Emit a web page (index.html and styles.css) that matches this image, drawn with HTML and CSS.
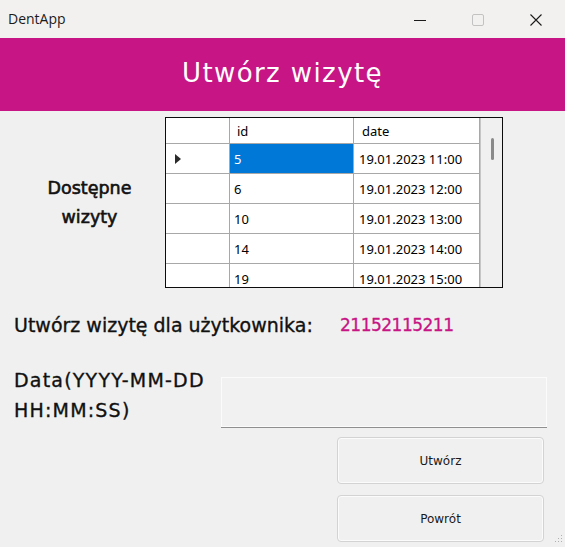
FILE: index.html
```html
<!DOCTYPE html>
<html lang="pl">
<head>
<meta charset="utf-8">
<title>DentApp</title>
<link rel="stylesheet" href="styles.css">
</head>
<body>
<div class="window">
  <div class="titlebar">
    <span class="app-title">DentApp</span>
    <div class="controls">
      <span class="ctl"><svg width="12" height="12" viewBox="0 0 12 12"><line x1="0" y1="6.5" x2="12" y2="6.5" stroke="#1b1b1b" stroke-width="1"/></svg></span>
      <span class="ctl"><svg width="12" height="12" viewBox="0 0 12 12"><rect x="0.5" y="0.5" width="11" height="11" rx="1.5" fill="none" stroke="#c2c2c2" stroke-width="1"/></svg></span>
      <span class="ctl"><svg width="12" height="12" viewBox="0 0 12 12"><path d="M0.5 0.5 L11.5 11.5 M11.5 0.5 L0.5 11.5" stroke="#1b1b1b" stroke-width="1.1" fill="none"/></svg></span>
    </div>
  </div>
  <header class="banner"><h1 class="banner-title">Utwórz wizytę</h1></header>
  <main class="content">
    <section class="avail">
      <div class="avail-label">Dostępne<br>wizyty</div>
      <div class="grid">
        <div class="cells">
          <div class="cell head rowhead"></div>
          <div class="cell head col-id">id</div>
          <div class="cell head col-date">date</div>

          <div class="cell rowhead"><svg width="6" height="10" viewBox="0 0 6 10"><path d="M0 0 L6 5 L0 10 Z" fill="#2b2b2b"/></svg></div>
          <div class="cell col-id selected">5</div>
          <div class="cell col-date">19.01.2023 11:00</div>

          <div class="cell rowhead"></div>
          <div class="cell col-id">6</div>
          <div class="cell col-date">19.01.2023 12:00</div>

          <div class="cell rowhead"></div>
          <div class="cell col-id">10</div>
          <div class="cell col-date">19.01.2023 13:00</div>

          <div class="cell rowhead"></div>
          <div class="cell col-id">14</div>
          <div class="cell col-date">19.01.2023 14:00</div>

          <div class="cell rowhead"></div>
          <div class="cell col-id">19</div>
          <div class="cell col-date">19.01.2023 15:00</div>
        </div>
        <div class="vscroll"><div class="thumb"></div></div>
      </div>
    </section>
    <section class="user-row">
      <span class="user-label">Utwórz wizytę dla użytkownika:</span>
      <span class="pesel">21152115211</span>
    </section>
    <section class="date-row">
      <div class="date-label">Data(YYYY-MM-DD<br>HH:MM:SS)</div>
      <div class="textbox"></div>
    </section>
    <div class="actions">
      <button class="btn">Utwórz</button>
      <button class="btn">Powrót</button>
    </div>
  </main>
  <svg class="grip" width="8" height="10" viewBox="0 0 8 10">
    <rect x="6" y="0" width="1" height="1" fill="#b0b0b0"/>
    <rect x="6" y="3" width="1" height="1" fill="#b0b0b0"/>
    <rect x="3" y="3" width="1" height="1" fill="#b0b0b0"/>
    <rect x="6" y="6" width="1" height="1" fill="#b0b0b0"/>
    <rect x="3" y="6" width="1" height="1" fill="#b0b0b0"/>
    <rect x="0" y="6" width="1" height="1" fill="#b0b0b0"/>
  </svg>
</div>
</body>
</html>
```

FILE: styles.css
```css
html, body {
  margin: 0;
  padding: 0;
}
body {
  width: 565px;
  height: 547px;
  overflow: hidden;
  background: #f0f0f0;
}
.window {
  position: relative;
  width: 565px;
  height: 547px;
  background: #f0f0f0;
  font-family: "DejaVu Sans", sans-serif;
  color: #111;
}

/* title bar */
.titlebar {
  height: 38px;
  background: #f3f1ef;
  display: flex;
  align-items: center;
  justify-content: space-between;
  overflow: hidden;
}
.app-title {
  font-family: "Open Sans", "Noto Sans", sans-serif;
  font-size: 14px;
  color: #1b1b1b;
  padding-left: 8px;
  line-height: 38px;
}
.controls {
  display: flex;
  height: 38px;
}
.ctl {
  width: 58px;
  height: 38px;
  display: flex;
  align-items: center;
  justify-content: center;
}
.ctl svg {
  display: block;
  margin-top: 1px;
}

/* banner */
.banner {
  height: 73px;
  background: #c71585;
  display: flex;
  align-items: center;
  justify-content: center;
}
.banner-title {
  margin: 0 0 3px 0;
  font-family: "DejaVu Sans", sans-serif;
  font-weight: normal;
  font-size: 26px;
  letter-spacing: 1.4px;
  color: #ffffff;
}

/* content */
.content {
  padding-top: 6px;
}
.avail {
  display: flex;
  align-items: center;
  height: 171px;
}
.avail-label {
  width: 165px;
  box-sizing: border-box;
  padding-left: 14px;
  text-align: center;
  font-size: 17.5px;
  line-height: 29px;
  color: #111;
  -webkit-text-stroke: 0.6px #111;
}
.grid {
  width: 338px;
  height: 171px;
  box-sizing: border-box;
  border: 1px solid #0c0c0c;
  display: flex;
  overflow: hidden;
  background: #ffffff;
}
.cells {
  width: 314px;
  flex: none;
  display: grid;
  grid-template-columns: 64px 124px 126px;
  grid-template-rows: 26px;
  grid-auto-rows: 30px;
  align-content: start;
  font-family: "Noto Sans", "Open Sans", sans-serif;
  font-size: 13px;
  color: #000;
}
.cell {
  box-sizing: border-box;
  border-right: 1px solid #a8a8a8;
  border-bottom: 1px solid #a8a8a8;
  background: #fff;
  display: flex;
  align-items: center;
  padding-left: 4px;
  white-space: nowrap;
}
.cell.col-date {
  padding-left: 5px;
}
.cell.head.col-id {
  padding-left: 7px;
}
.cell.head.col-date {
  padding-left: 8px;
}
.cell.rowhead {
  padding-left: 9px;
}
.cell.selected {
  background: #0078d7;
  color: #ffffff;
}
.vscroll {
  flex: 1;
  position: relative;
  background: #f0f0f0;
  border-left: 1px solid #c6c6c6;
  padding: 20px 0 0 10px;
}
.thumb {
  width: 3px;
  height: 22px;
  border-radius: 2px;
  background: #8a8a8a;
}

.user-row {
  margin-top: 25px;
  display: grid;
  grid-template-columns: 326px auto;
  padding-left: 14px;
  line-height: 24px;
  font-size: 19px;
  color: #111;
}
.user-label {
  -webkit-text-stroke: 0.35px #111;
}
.pesel {
  font-size: 17px;
  letter-spacing: -0.5px;
  color: #c71585;
  -webkit-text-stroke: 0.3px #c71585;
}

.date-row {
  margin-top: 28px;
  display: flex;
  padding-left: 14px;
  padding-right: 18px;
}
.date-label {
  flex: 1;
  font-size: 19px;
  line-height: 30px;
  letter-spacing: 1.2px;
  white-space: nowrap;
  color: #111;
  -webkit-text-stroke: 0.35px #111;
}
.textbox {
  width: 326px;
  height: 50px;
  margin-top: 12px;
  box-sizing: border-box;
  border: 1px solid #fbfbfb;
  background: #f1f1f1;
  box-shadow: 0 1px 0 #8f8f8f;
}

.actions {
  margin-top: 10px;
  display: flex;
  flex-direction: column;
  align-items: flex-end;
  gap: 11px;
  padding-right: 21px;
}
.btn {
  width: 207px;
  height: 47px;
  box-sizing: border-box;
  border: 1px solid #d3d3d3;
  border-radius: 4px;
  background: #f0f0f0;
  box-shadow: inset 0 0 0 1px #fbfbfb;
  font-family: "DejaVu Sans", sans-serif;
  font-size: 12px;
  color: #1a1a1a;
  padding: 0;
}

.grip {
  position: absolute;
  right: 2px;
  bottom: 2px;
}
```
